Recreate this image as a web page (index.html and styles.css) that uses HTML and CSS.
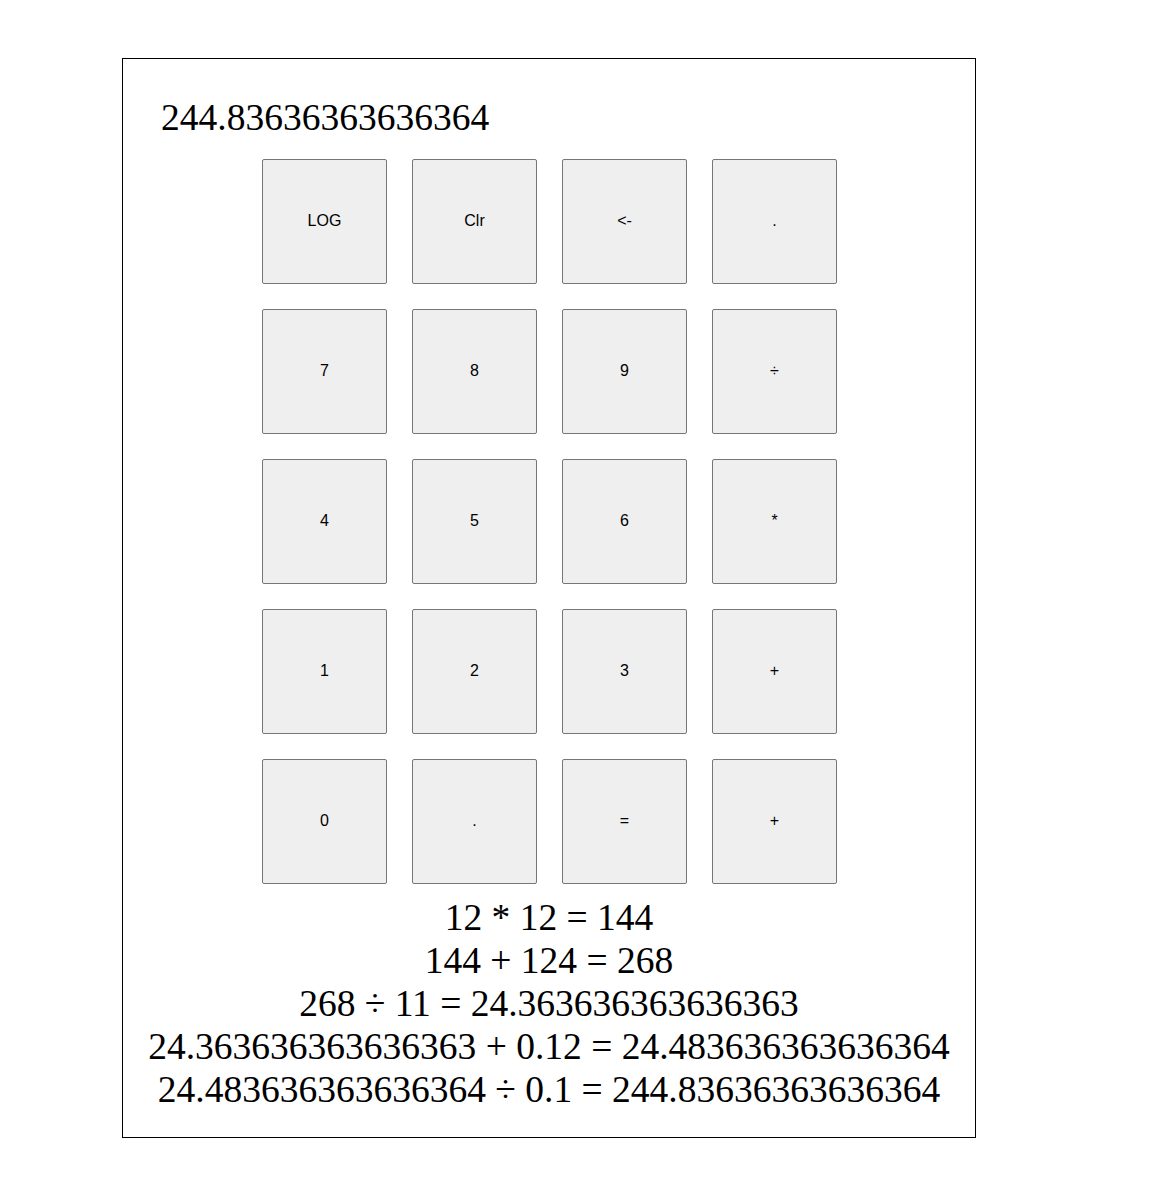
FILE: index.html
```html
<!DOCTYPE html>
<html>
<head>
<meta charset="utf-8">
<link rel="stylesheet" href="styles.css">
</head>
<body>
<div class="calc">
  <div class="display">244.83636363636364</div>
  <div class="keys">
    <button class="key">LOG</button>
    <button class="key">Clr</button>
    <button class="key">&lt;-</button>
    <button class="key">.</button>
    <button class="key">7</button>
    <button class="key">8</button>
    <button class="key">9</button>
    <button class="key">÷</button>
    <button class="key">4</button>
    <button class="key">5</button>
    <button class="key">6</button>
    <button class="key">*</button>
    <button class="key">1</button>
    <button class="key">2</button>
    <button class="key">3</button>
    <button class="key">+</button>
    <button class="key">0</button>
    <button class="key">.</button>
    <button class="key">=</button>
    <button class="key">+</button>
  </div>
  <div class="log">
    <div class="log-line">12 * 12 = 144</div>
    <div class="log-line">144 + 124 = 268</div>
    <div class="log-line">268 ÷ 11 = 24.363636363636363</div>
    <div class="log-line">24.363636363636363 + 0.12 = 24.483636363636364</div>
    <div class="log-line">24.483636363636364 ÷ 0.1 = 244.83636363636364</div>
  </div>
</div>
</body>
</html>
```

FILE: styles.css
```css
html, body {
  margin: 0;
  padding: 0;
  background: #ffffff;
}

body {
  padding: 58px 0 0 122px;
}

.calc {
  width: 852px;
  border: 1px solid #000000;
  padding: 37px 0 26px 0;
  font-family: "Liberation Serif", "Times New Roman", serif;
  color: #000000;
}

.display {
  font-size: 37.5px;
  line-height: 43px;
  padding-left: 38px;
}

.keys {
  display: grid;
  grid-template-columns: repeat(4, 125px);
  grid-auto-rows: 125px;
  gap: 25px;
  justify-content: start;
  margin: 20px 0 12px 139px;
}

.key {
  box-sizing: border-box;
  width: 125px;
  height: 125px;
  margin: 0;
  padding: 0 0 2px 0;
  background: #efefef;
  border: 1px solid #767676;
  border-radius: 2px;
  font-family: "Liberation Sans", Arial, sans-serif;
  font-size: 16px;
  color: #000000;
}

.log {
  text-align: center;
  font-size: 37.5px;
  line-height: 43px;
}
```
